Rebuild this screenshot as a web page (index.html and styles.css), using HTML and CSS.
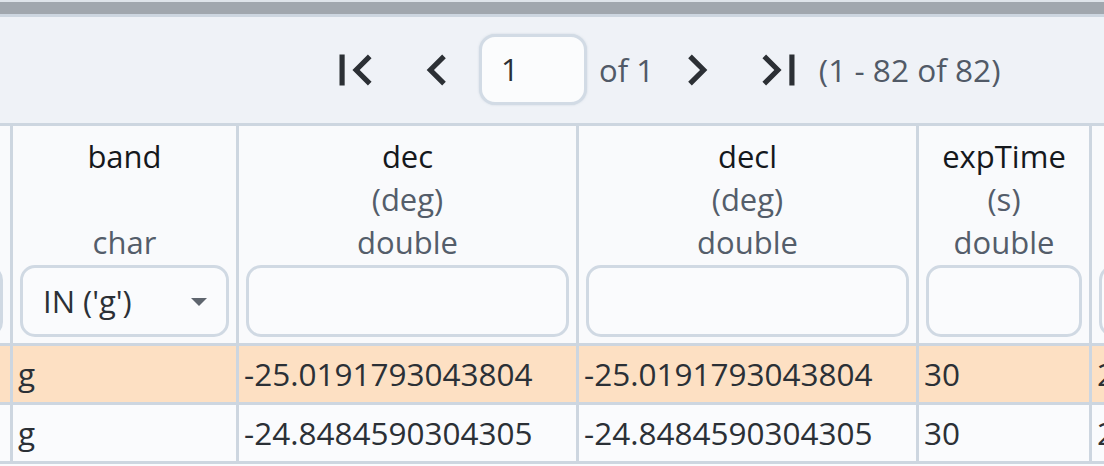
FILE: index.html
```html
<!DOCTYPE html>
<html lang="en">
<head>
<meta charset="utf-8">
<title>Table</title>
<link rel="stylesheet" href="styles.css">
</head>
<body>
<div class="top-strip"><div class="top-light"></div><div class="top-bar"></div></div>
<div class="toolbar">
  <div class="pager">
    <button class="icon-btn" aria-label="First page"><svg viewBox="0 0 24 24"><path d="M18.41 16.59L13.82 12l4.59-4.59L17 6l-6 6 6 6zM6 6h2v12H6z"/></svg></button>
    <button class="icon-btn gap-l" aria-label="Previous page"><svg viewBox="0 0 24 24"><path d="M15.41 7.41L14 6l-6 6 6 6 1.41-1.41L10.83 12z"/></svg></button>
    <div class="page-input">1</div>
    <span class="of-text">of 1</span>
    <button class="icon-btn" aria-label="Next page"><svg viewBox="0 0 24 24"><path d="M10 6L8.59 7.41 13.17 12l-4.58 4.59L10 18l6-6z"/></svg></button>
    <button class="icon-btn gap-l" aria-label="Last page"><svg viewBox="0 0 24 24"><path d="M5.59 7.41L10.18 12l-4.59 4.59L7 18l6-6-6-6zM16 6h2v12h-2z"/></svg></button>
    <span class="range-text">(1 - 82 of 82)</span>
  </div>
</div>
<div class="table-wrap">
  <div class="grid">
    <div class="hcell hcell-clip"><div class="filter"></div></div>
    <div class="hcell">
      <div class="hname">band</div>
      <div class="hmeta">&nbsp;</div>
      <div class="hmeta">char</div>
      <div class="filter select"><span>IN ('g')</span><span class="caret"></span></div>
    </div>
    <div class="hcell">
      <div class="hname">dec</div>
      <div class="hmeta">(deg)</div>
      <div class="hmeta">double</div>
      <div class="filter"></div>
    </div>
    <div class="hcell">
      <div class="hname">decl</div>
      <div class="hmeta">(deg)</div>
      <div class="hmeta">double</div>
      <div class="filter"></div>
    </div>
    <div class="hcell">
      <div class="hname">expTime</div>
      <div class="hmeta">(s)</div>
      <div class="hmeta">double</div>
      <div class="filter"></div>
    </div>
    <div class="hcell">
      <div class="hname">&nbsp;</div>
      <div class="hmeta">&nbsp;</div>
      <div class="hmeta">&nbsp;</div>
      <div class="filter"></div>
    </div>

    <div class="cell hl"></div>
    <div class="cell hl">g</div>
    <div class="cell hl">-25.0191793043804</div>
    <div class="cell hl">-25.0191793043804</div>
    <div class="cell hl">30</div>
    <div class="cell hl">2023-11-29</div>

    <div class="cell"></div>
    <div class="cell">g</div>
    <div class="cell">-24.8484590304305</div>
    <div class="cell">-24.8484590304305</div>
    <div class="cell">30</div>
    <div class="cell">2023-11-29</div>
  </div>
</div>
</body>
</html>
```
FILE: styles.css
```css
html, body {
  margin: 0;
  padding: 0;
}
body {
  width: 1104px;
  height: 466px;
  overflow: hidden;
  background: #fafbfd;
  font-family: "Open Sans", "Noto Sans", sans-serif;
  color: #2b3036;
}
.top-strip {
  border-bottom: 3px solid #cdd6e0;
}
.top-light {
  height: 2px;
  background: #dfe4ea;
}
.top-bar {
  height: 12px;
  background: #a1a7ae;
}
.toolbar {
  height: 106px;
  background: #eff2f7;
  border-bottom: 3px solid #cdd6e0;
  display: flex;
  align-items: center;
}
.pager {
  display: flex;
  align-items: center;
  padding-left: 324px;
  margin-top: -1px;
}
.icon-btn {
  width: 62px;
  height: 62px;
  padding: 0;
  border: 0;
  background: none;
  display: flex;
}
.icon-btn svg {
  width: 62px;
  height: 62px;
  fill: #2c3035;
}
.gap-l {
  margin-left: 20px;
}
.page-input {
  box-sizing: border-box;
  width: 108px;
  height: 71px;
  margin-left: 11px;
  border: 3px solid #d2dbe5;
  border-radius: 16px;
  background: #fbfcfd;
  box-shadow: 0 0 2px rgba(170, 185, 200, 0.5);
  padding-left: 19px;
  font-size: 31px;
  line-height: 64px;
  color: #2b3036;
}
.of-text {
  font-size: 31px;
  color: #515a67;
  margin-left: 12px;
  margin-right: 12px;
  white-space: nowrap;
}
.range-text {
  font-size: 31.6px;
  color: #515a67;
  margin-left: 9px;
  white-space: nowrap;
}
.table-wrap {
  overflow: hidden;
  width: 1104px;
  height: 340px;
}
.grid {
  display: grid;
  width: max-content;
  grid-template-columns: 10px 223px 337px 337px 170px 200px;
  grid-auto-rows: 56px;
  grid-template-rows: 217px;
  gap: 3px;
  background: #cdd6e0;
  padding-bottom: 3px;
}
.hcell {
  background: #f9fafc;
  display: flex;
  flex-direction: column;
  align-items: stretch;
  padding: 9px 7px 6px;
  text-align: center;
  font-size: 31px;
  line-height: 43px;
  overflow: hidden;
}
.hcell-clip {
  padding: 0 7px 6px 0;
  align-items: flex-end;
  justify-content: flex-end;
}
.hcell-clip .filter {
  width: 150px;
  flex: none;
}
.hname {
  color: #15181c;
}
.hmeta {
  color: #545d6a;
}
.filter {
  box-sizing: border-box;
  height: 72px;
  margin-top: 1px;
  border: 3px solid #d0d9e3;
  border-radius: 15px;
  background: #fafbfd;
}
.select {
  display: flex;
  align-items: center;
  justify-content: space-between;
  padding: 0 19px 0 20px;
  text-align: left;
  color: #2b3036;
}
.caret {
  width: 0;
  height: 0;
  border-left: 8px solid transparent;
  border-right: 8px solid transparent;
  border-top: 8px solid #5e656e;
  margin-top: 2px;
}
.cell {
  background: #fafbfd;
  font-size: 31.5px;
  line-height: 56px;
  padding: 0 5px;
  white-space: nowrap;
  overflow: hidden;
  color: #2b3036;
}
.cell.hl {
  background: #fde0c3;
}
```
